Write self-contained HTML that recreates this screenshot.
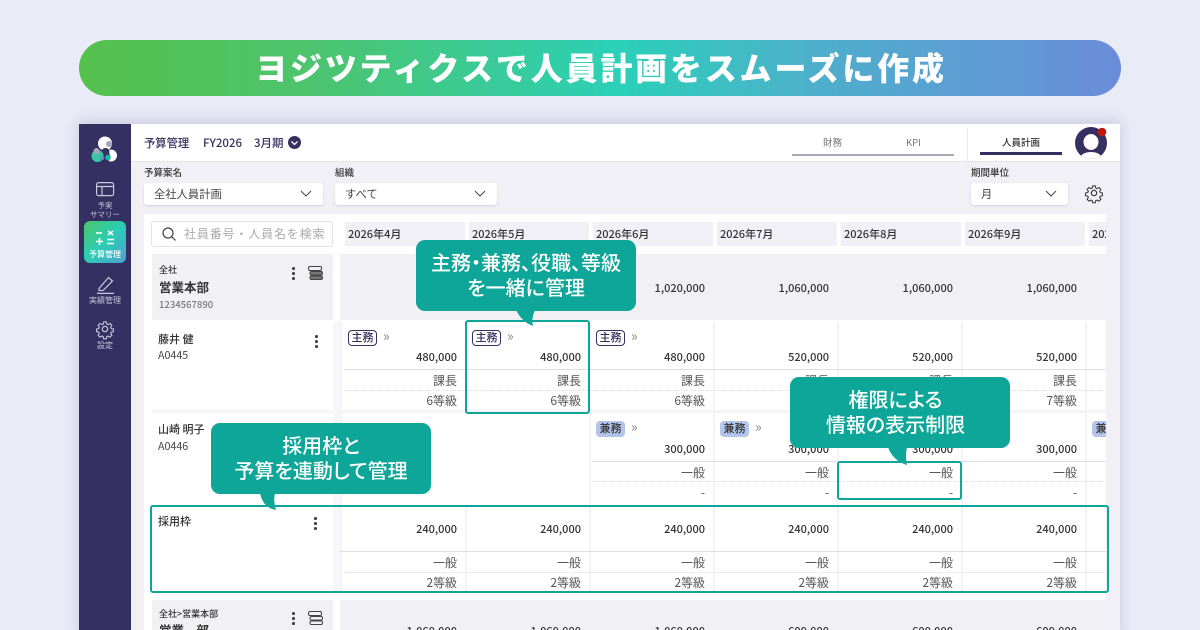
<!DOCTYPE html>
<html lang="ja"><head><meta charset="utf-8"><title>人員計画</title>
<style>
*{box-sizing:border-box;margin:0;padding:0}
html,body{width:1200px;height:630px;overflow:hidden;background:#e9ebf6}
body{position:relative;font-family:"Noto Sans CJK JP","Liberation Sans",sans-serif;color:#333}
.a,.t{position:absolute}
.t{white-space:nowrap;line-height:16px}
svg{position:absolute;overflow:visible}
#banner{left:79px;top:40px;width:1042px;height:56px;border-radius:28px;background:linear-gradient(90deg,#55c14c 0%,#4dc46d 22%,#2bd0b8 52%,#4db0cb 70%,#6b8cdb 100%);color:#fff;font-size:32px;font-weight:900;text-align:center;line-height:55px;letter-spacing:2.8px;padding-left:2px}
#shadow{left:79px;top:124px;width:1041px;height:520px;box-shadow:0 -3px 14px rgba(120,120,160,.28)}
#side{left:79px;top:124px;width:52px;height:506px;background:#343062}
#main{left:131px;top:124px;width:989px;height:506px;background:#f1f0f6}
#top{left:131px;top:124px;width:989px;height:38px;background:#fff;border-bottom:1px solid #e3e3ea}
#panel{left:144px;top:214px;width:962px;height:416px;background:#fff}
#clip{left:0;top:0;width:1106px;height:630px;overflow:hidden}
.sl{color:#c9c8dc;font-size:8px;line-height:9px;text-align:center;left:79px;width:52px;white-space:normal}
.lab{font-size:9.5px;font-weight:500;color:#333}
.sel{top:183px;height:22px;background:#fff;border-radius:3px;box-shadow:0 1px 2px rgba(90,90,120,.2);font-size:11.3px;color:#444;line-height:22px;padding-left:10px}
.d{top:222px;height:24px;width:120px;background:#f0f0f6;font-size:11px;font-weight:500;color:#333;line-height:24px;padding-left:3px;white-space:nowrap;overflow:hidden}
.h{height:1px;background:#dedee4;left:344px;width:762px}
.o{height:0;border-top:1px dotted #dcdce2;left:344px;width:762px}
.v{width:2px;background:#f4f4f8}
.n{font-size:11px;font-weight:500;color:#333;margin-top:1px}
.s{font-size:12px;color:#555}
.c1{right:649px}.c2{right:525px}.c3{right:401px}.c4{right:277px}.c5{right:153px}.c6{right:29px}
.tag{width:29px;height:16px;border-radius:4px;font-size:11px;font-weight:500;text-align:center;line-height:15px}
.m{background:#fff;border:1.2px solid #343062;color:#343062;line-height:13.5px}
.k{background:#b4c5ec;color:#333}
.ch{font-size:14px;color:#888;line-height:14px}
.dot{width:2.6px;height:2.6px;border-radius:50%;background:#444}
.box{border:2px solid #0fa598;border-radius:3px;background:transparent}
.call{background:#0ea698;border-radius:9px;width:220px;height:71px;color:#fff;font-size:20px;font-weight:500;text-align:center;line-height:25px;padding-top:9px;font-feature-settings:"palt"}
</style></head><body>
<div class="a" id="banner">ヨジツティクスで人員計画をスムーズに作成</div>
<div class="a" id="shadow"></div>
<div class="a" id="main"></div>
<div class="a" id="top"></div>
<div class="a" id="side"></div>

<!-- logo -->
<svg style="left:79px;top:124px" width="52" height="60" viewBox="0 0 52 60">
<circle cx="26" cy="19.5" r="7" fill="#fff"/><circle cx="30" cy="20" r="3" fill="#a6a5bd"/>
<circle cx="32" cy="31.5" r="6" fill="#fff"/><circle cx="26.5" cy="28" r="4" fill="#343062"/><circle cx="27" cy="33" r="4.6" fill="#343062"/><circle cx="29" cy="33.5" r="2.8" fill="#1fb7a6"/>
<circle cx="18.5" cy="32" r="6" fill="#39c6a0"/><circle cx="17.5" cy="27" r="3" fill="#a6a5bd"/><circle cx="23" cy="34" r="2.2" fill="#5a92c8"/>
</svg>
<!-- summary icon -->
<svg style="left:96px;top:182px" width="18" height="15" fill="none" stroke="#c9c8dc" stroke-width="1.2"><rect x=".6" y=".6" width="17" height="13" rx="2"/><path d="M.6 4.5H17.4M6 4.5V13.6"/></svg>
<div class="t sl" style="top:201px;font-size:7.5px">予実<br>サマリー</div>
<div class="a" style="left:84px;top:221px;width:42px;height:42px;border-radius:6px;background:linear-gradient(135deg,#4cc46a,#2bcdb5 50%,#4f9ed0)"></div>
<svg style="left:96px;top:230px" width="20" height="16" stroke="#fff" stroke-width="1.6" fill="none"><path d="M0 3H6M12 1L17 5M17 1L12 5M0 11.5H7M3.5 8V15M11 9.5H18M11 13.5H18"/></svg>
<div class="t sl" style="top:250px;color:#fff;font-weight:500">予算管理</div>
<!-- pencil -->
<svg style="left:97px;top:275px" width="18" height="19" fill="none" stroke="#c9c8dc" stroke-width="1.2"><path d="M2 13.5L11.5 2.5L15.5 6L6 15.5H2Z"/><path d="M0 18.4H17"/></svg>
<div class="t sl" style="top:296px">実績管理</div>
<!-- sidebar gear -->
<svg style="left:96px;top:320px" width="18" height="18" viewBox="0 0 24 24" fill="none" stroke="#c9c8dc" stroke-width="1.6"><circle cx="12" cy="12" r="3.6"/><path d="M10 1.5h4l.6 3.2 2 .9 2.8-1.8 2.8 2.8-1.8 2.8.9 2 3.2.6v4l-3.2.6-.9 2 1.8 2.8-2.8 2.8-2.8-1.8-2 .9-.6 3.2h-4l-.6-3.2-2-.9-2.8 1.8-2.8-2.8 1.8-2.8-.9-2-3.2-.6v-4l3.2-.6.9-2-1.8-2.8 2.8-2.8 2.8 1.8 2-.9z" transform="translate(1.2 1.2) scale(.9)"/></svg>
<div class="t sl" style="top:341px">設定</div>

<!-- top bar -->
<div class="t" style="left:144px;top:135px;font-size:11.3px;font-weight:500;color:#343062">予算管理</div>
<div class="t" style="left:203px;top:135px;font-size:11.5px;font-weight:500;color:#343062">FY2026</div>
<div class="t" style="left:254px;top:135px;font-size:11.5px;font-weight:500;color:#343062">3月期</div>
<svg style="left:288px;top:136px" width="13" height="13"><circle cx="6.5" cy="6.5" r="6.5" fill="#343062"/><path d="M3.5 5.5L6.5 8.5L9.5 5.5" stroke="#fff" stroke-width="1.3" fill="none"/></svg>
<div class="t" style="left:823px;top:134px;font-size:9.5px;color:#777">財務</div>
<div class="t" style="left:906px;top:134px;font-size:9.5px;color:#777">KPI</div>
<div class="a" style="left:792px;top:154px;width:162px;height:2px;background:#a9a9b8"></div>
<div class="a" style="left:967px;top:128px;width:1px;height:33px;background:#e8e8ee"></div>
<div class="t" style="left:1002px;top:134px;font-size:9.5px;font-weight:500;color:#333">人員計画</div>
<div class="a" style="left:980px;top:152px;width:82px;height:3px;background:#343062"></div>
<svg style="left:1074px;top:126px" width="34" height="34"><defs><clipPath id="ac"><circle cx="17" cy="17" r="16"/></clipPath></defs><circle cx="17" cy="17" r="16" fill="#343062"/><g clip-path="url(#ac)"><ellipse cx="17" cy="16" rx="7.5" ry="8" fill="#fff"/><ellipse cx="17" cy="31" rx="10" ry="5" fill="#fff"/></g><circle cx="28" cy="6" r="4.3" fill="#c0180c"/></svg>

<!-- filters -->
<div class="t lab" style="left:144px;top:164px">予算案名</div>
<div class="a sel" style="left:144px;width:179px">全社人員計画</div>
<svg style="left:300px;top:190px" width="12" height="8" fill="none" stroke="#444" stroke-width="1"><path d="M1 1L6 6L11 1"/></svg>
<div class="t lab" style="left:335px;top:164px">組織</div>
<div class="a sel" style="left:335px;width:162px">すべて</div>
<svg style="left:474px;top:190px" width="12" height="8" fill="none" stroke="#444" stroke-width="1"><path d="M1 1L6 6L11 1"/></svg>
<div class="t lab" style="left:971px;top:164px">期間単位</div>
<div class="a sel" style="left:971px;width:97px">月</div>
<svg style="left:1045px;top:190px" width="12" height="8" fill="none" stroke="#444" stroke-width="1"><path d="M1 1L6 6L11 1"/></svg>
<svg style="left:1085px;top:184px" width="18" height="18" viewBox="0 0 24 24" fill="none" stroke="#333" stroke-width="1.5"><circle cx="12" cy="12" r="3.6"/><path d="M10 1.5h4l.6 3.2 2 .9 2.8-1.8 2.8 2.8-1.8 2.8.9 2 3.2.6v4l-3.2.6-.9 2 1.8 2.8-2.8 2.8-2.8-1.8-2 .9-.6 3.2h-4l-.6-3.2-2-.9-2.8 1.8-2.8-2.8 1.8-2.8-.9-2-3.2-.6v-4l3.2-.6.9-2-1.8-2.8 2.8-2.8 2.8 1.8 2-.9z" transform="translate(1.2 1.2) scale(.9)"/></svg>

<div class="a" id="panel"></div>
<div class="a" id="clip">
<!-- search -->
<div class="a" style="left:151px;top:221px;width:182px;height:26px;background:#fff;border:1px solid #e3e3e8;border-radius:3px"></div>
<svg style="left:162px;top:227px" width="15" height="15" fill="none" stroke="#444" stroke-width="1.2"><circle cx="6" cy="6" r="5"/><path d="M9.6 9.6L13.5 13.5"/></svg>
<div class="t" style="left:184px;top:226px;font-size:12px;color:#aaa;letter-spacing:.85px">社員番号・人員名を検索</div>
<!-- dates -->
<div class="a d" style="left:345px">2026年4月</div>
<div class="a d" style="left:469px">2026年5月</div>
<div class="a d" style="left:593px">2026年6月</div>
<div class="a d" style="left:717px">2026年7月</div>
<div class="a d" style="left:841px">2026年8月</div>
<div class="a d" style="left:965px">2026年9月</div>
<div class="a d" style="left:1089px">2026年10月</div>

<!-- group backgrounds -->
<div class="a" style="left:152px;top:254px;width:181px;height:66px;background:#f0f0f5"></div>
<div class="a" style="left:340px;top:254px;width:766px;height:66px;background:#f0f0f5"></div>
<div class="a" style="left:152px;top:600px;width:181px;height:30px;background:#f0f0f5"></div>
<div class="a" style="left:340px;top:600px;width:766px;height:30px;background:#f0f0f5"></div>
<div class="a" style="left:152px;top:410px;width:954px;height:3px;background:#f5f5f8"></div>
<div class="a" style="left:333px;top:322px;width:7px;height:270px;background:#f7f7fa"></div>

<!-- verticals -->
<div class="a v" style="left:340px;top:322px;height:270px"></div>
<div class="a v" style="left:465px;top:322px;height:88px"></div>
<div class="a v" style="left:589px;top:322px;height:270px"></div>
<div class="a v" style="left:713px;top:322px;height:270px"></div>
<div class="a v" style="left:837px;top:322px;height:270px"></div>
<div class="a v" style="left:961px;top:322px;height:270px"></div>
<div class="a v" style="left:1085px;top:322px;height:270px"></div>
<div class="a v" style="left:465px;top:506px;height:86px"></div>

<!-- left cells -->
<div class="t" style="left:159px;top:262px;font-size:9px;font-weight:500">全社</div>
<div class="t" style="left:159px;top:279px;font-size:12.5px;font-weight:700">営業本部</div>
<div class="t" style="left:159px;top:296px;font-size:9.5px;color:#777;font-weight:500">1234567890</div>
<div class="a dot" style="left:292px;top:267px"></div><div class="a dot" style="left:292px;top:272px"></div><div class="a dot" style="left:292px;top:277px"></div>
<svg style="left:308px;top:266px" width="15" height="15" fill="none" stroke="#444" stroke-width="1"><rect x=".5" y=".5" width="13" height="4" rx="1.5"/><rect x="2" y="5.5" width="12.5" height="3.5" rx="1.5" fill="#777"/><rect x="2" y="10" width="12.5" height="3.5" rx="1.5" fill="#777"/></svg>

<div class="t" style="left:158px;top:331px;font-size:11px;font-weight:500">藤井 健</div>
<div class="t" style="left:158px;top:348px;font-size:10.7px;color:#444">A0445</div>
<div class="a dot" style="left:315px;top:335px"></div><div class="a dot" style="left:315px;top:340px"></div><div class="a dot" style="left:315px;top:345px"></div>
<div class="t" style="left:158px;top:421px;font-size:11px;font-weight:500">山崎 明子</div>
<div class="t" style="left:158px;top:439px;font-size:10.7px;color:#444">A0446</div>
<div class="t" style="left:158px;top:513px;font-size:11px;font-weight:500">採用枠</div>
<div class="a dot" style="left:314px;top:517px"></div><div class="a dot" style="left:314px;top:522px"></div><div class="a dot" style="left:314px;top:527px"></div>
<div class="t" style="left:159px;top:606px;font-size:9px;font-weight:500">全社&gt;営業本部</div>
<div class="t" style="left:159px;top:622px;font-size:12.5px;font-weight:700">営業　部</div>
<div class="a dot" style="left:292px;top:612px"></div><div class="a dot" style="left:292px;top:617px"></div><div class="a dot" style="left:292px;top:622px"></div>
<svg style="left:308px;top:611px" width="15" height="15" fill="none" stroke="#444" stroke-width="1"><rect x=".5" y=".5" width="13" height="4" rx="1.5"/><rect x="2" y="5.5" width="12.5" height="3.5" rx="1.5"/><rect x="2" y="10" width="12.5" height="3.5" rx="1.5"/></svg>

<!-- group row values -->
<div class="t n c3" style="top:279px">1,020,000</div><div class="t n c4" style="top:279px">1,060,000</div><div class="t n c5" style="top:279px">1,060,000</div><div class="t n c6" style="top:279px">1,060,000</div>

<!-- row 1 -->
<div class="a tag m" style="left:348px;top:330px">主務</div><div class="t ch" style="left:383px;top:329px">»</div>
<div class="a tag m" style="left:472px;top:330px">主務</div><div class="t ch" style="left:507px;top:329px">»</div>
<div class="a tag m" style="left:596px;top:330px">主務</div><div class="t ch" style="left:631px;top:329px">»</div>
<div class="t n c1" style="top:348px">480,000</div><div class="t n c2" style="top:348px">480,000</div><div class="t n c3" style="top:348px">480,000</div><div class="t n c4" style="top:348px">520,000</div><div class="t n c5" style="top:348px">520,000</div><div class="t n c6" style="top:348px">520,000</div>
<div class="a h" style="top:369px"></div><div class="a o" style="top:390px"></div>
<div class="t s c1" style="top:373px">課長</div><div class="t s c2" style="top:373px">課長</div><div class="t s c3" style="top:373px">課長</div><div class="t s c4" style="top:373px">課長</div><div class="t s c5" style="top:373px">課長</div><div class="t s c6" style="top:373px">課長</div>
<div class="t s c1" style="top:393px">6等級</div><div class="t s c2" style="top:393px">6等級</div><div class="t s c3" style="top:393px">6等級</div><div class="t s c6" style="top:393px">7等級</div>

<!-- row 2 -->
<div class="a tag k" style="left:596px;top:421px">兼務</div><div class="t ch" style="left:631px;top:420px">»</div>
<div class="a tag k" style="left:720px;top:421px">兼務</div><div class="t ch" style="left:755px;top:420px">»</div>
<div class="a tag k" style="left:1092px;top:421px">兼務</div>
<div class="t n c3" style="top:440px">300,000</div><div class="t n c4" style="top:440px">300,000</div><div class="t n c5" style="top:440px">300,000</div><div class="t n c6" style="top:440px">300,000</div>
<div class="a h" style="top:461px;left:592px;width:514px"></div><div class="a o" style="top:481px;left:592px;width:514px"></div>
<div class="t s c3" style="top:465px">一般</div><div class="t s c4" style="top:465px">一般</div><div class="t s c5" style="top:465px">一般</div><div class="t s c6" style="top:465px">一般</div>
<div class="t s c3" style="top:485px">-</div><div class="t s c4" style="top:485px">-</div><div class="t s c5" style="top:485px">-</div><div class="t s c6" style="top:485px">-</div>

<!-- row 3 -->
<div class="t n c1" style="top:520px">240,000</div><div class="t n c2" style="top:520px">240,000</div><div class="t n c3" style="top:520px">240,000</div><div class="t n c4" style="top:520px">240,000</div><div class="t n c5" style="top:520px">240,000</div><div class="t n c6" style="top:520px">240,000</div>
<div class="a h" style="top:551px;left:340px;width:766px"></div><div class="a o" style="top:572px"></div>
<div class="t s c1" style="top:555px">一般</div><div class="t s c2" style="top:555px">一般</div><div class="t s c3" style="top:555px">一般</div><div class="t s c4" style="top:555px">一般</div><div class="t s c5" style="top:555px">一般</div><div class="t s c6" style="top:555px">一般</div>
<div class="t s c1" style="top:575px">2等級</div><div class="t s c2" style="top:575px">2等級</div><div class="t s c3" style="top:575px">2等級</div><div class="t s c4" style="top:575px">2等級</div><div class="t s c5" style="top:575px">2等級</div><div class="t s c6" style="top:575px">2等級</div>

<!-- row 4 -->
<div class="t n c1" style="top:622px">1,060,000</div><div class="t n c2" style="top:622px">1,060,000</div><div class="t n c3" style="top:622px">1,060,000</div><div class="t n c4" style="top:622px">600,000</div><div class="t n c5" style="top:622px">600,000</div><div class="t n c6" style="top:622px">600,000</div>
</div>

<!-- highlight outlines -->
<div class="a box" style="left:465px;top:320px;width:125px;height:94px"></div>
<div class="a box" style="left:837px;top:461px;width:125px;height:39px"></div>
<div class="a box" style="left:150px;top:505px;width:959px;height:88px"></div>

<!-- callouts -->
<div class="a call" style="left:416px;top:240px">主務・兼務、役職、等級<br>を一緒に管理</div>
<svg style="left:510px;top:310px" width="30" height="18"><path d="M6 0H25Q21 9 23 16Q12 12 6 0Z" fill="#0ea698"/></svg>
<div class="a call" style="left:790px;top:377px;padding-right:9px">権限による<br>情報の表示制限</div>
<svg style="left:885px;top:447px" width="30" height="20"><path d="M3 0H22Q20 10 22 18Q8 14 3 0Z" fill="#0ea698"/></svg>
<div class="a call" style="left:211px;top:423px">採用枠と<br>予算を連動して管理</div>
<svg style="left:255px;top:493px" width="30" height="20"><path d="M5 0H20Q18 8 21 17Q8 15 5 0Z" fill="#0ea698"/></svg>
</body></html>
